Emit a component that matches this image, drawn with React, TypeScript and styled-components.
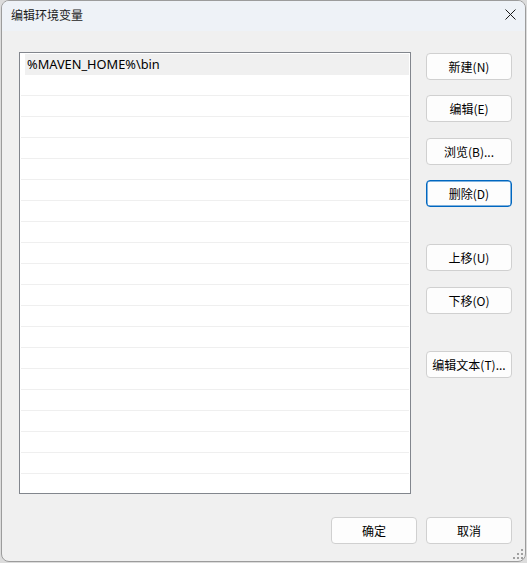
import React from 'react';
import styled, { createGlobalStyle } from 'styled-components';

const GlobalStyle = createGlobalStyle`
  html, body {
    margin: 0;
    padding: 0;
    background: #dcdcdc;
  }
  body {
    font-family: "Noto Sans", "Noto Sans CJK SC", sans-serif;
    font-size: 12px;
    color: #000;
  }
`;

const Window = styled.div`
  position: relative;
  box-sizing: border-box;
  width: 525px;
  height: 562px;
  margin-left: 1px;
  display: flex;
  flex-direction: column;
  border: 1px solid #9c9c9c;
  border-radius: 8px;
  background: #f0f0f0;
  overflow: hidden;
`;

const TitleBar = styled.div`
  height: 30px;
  flex: 0 0 auto;
  display: flex;
  align-items: center;
  justify-content: space-between;
  background: #eef2f7;
  padding: 0 10px 0 9px;
`;

const Title = styled.span`
  font-family: "Noto Sans CJK SC", sans-serif;
  font-size: 12px;
  color: #1b1b1b;
  margin-top: -3px;
`;

const CloseButton = styled.button`
  width: 30px;
  height: 30px;
  border: none;
  background: transparent;
  padding: 0;
  display: flex;
  align-items: center;
  justify-content: center;
  margin-right: -10px;
  margin-top: -3px;
`;

const Body = styled.div`
  flex: 1;
  display: flex;
  flex-direction: column;
  padding: 21px 13px 17px 17px;
`;

const Main = styled.div`
  flex: 1;
  display: flex;
  gap: 15px;
  align-items: flex-start;
`;

const ListBox = styled.div`
  box-sizing: border-box;
  width: 392px;
  height: 442px;
  border: 1px solid #82868d;
  background: #fff;
  padding: 1px;
  overflow: hidden;
`;

const Row = styled.div<{ $selected?: boolean }>`
  box-sizing: border-box;
  height: 21px;
  line-height: 21px;
  border-bottom: 1px solid ${p => (p.$selected ? '#f0f0f0' : '#efefef')};
  margin-left: ${p => (p.$selected ? '4px' : '0')};
  background: ${p => (p.$selected ? '#f0f0f0' : '#fff')};
  padding-left: 2px;
  font-family: "Noto Sans", sans-serif;
  font-size: 12.8px;
  white-space: nowrap;
`;

const ButtonColumn = styled.div`
  display: flex;
  flex-direction: column;
  gap: 37px;
  margin-top: 1px;
`;

const ButtonGroup = styled.div`
  display: flex;
  flex-direction: column;
  gap: 15.4px;
`;

const Button = styled.button<{ $focused?: boolean }>`
  box-sizing: border-box;
  width: 86px;
  height: 27px;
  padding: 0;
  border: 1px solid ${p => (p.$focused ? '#0067c0' : '#d0d0d0')};
  box-shadow: ${p => (p.$focused ? 'inset 0 0 0 0.5px #0067c0' : 'none')};
  border-radius: 4px;
  background: #fdfdfd;
  font-family: "Noto Sans CJK SC", sans-serif;
  font-size: 12px;
  color: #000;
`;

const Footer = styled.div`
  display: flex;
  justify-content: flex-end;
  gap: 9px;
  margin-top: 22px;
`;

const Grip = styled.svg`
  position: absolute;
  right: 2px;
  bottom: 2px;
`;

const entries = ['%MAVEN_HOME%\\bin'];

const App = () => {
  const rows = Array.from({ length: 21 }, (_, i) => entries[i] ?? '');

  return (
    <>
      <GlobalStyle />
      <Window>
        <TitleBar>
          <Title>编辑环境变量</Title>
          <CloseButton aria-label="关闭">
            <svg width="11" height="11" viewBox="0 0 11 11">
              <path d="M0.5 0.5 L10.5 10.5 M10.5 0.5 L0.5 10.5" stroke="#1a1a1a" strokeWidth="1" />
            </svg>
          </CloseButton>
        </TitleBar>
        <Body>
          <Main>
            <ListBox>
              {rows.map((text, i) => (
                <Row key={i} $selected={i === 0}>
                  {text}
                </Row>
              ))}
            </ListBox>
            <ButtonColumn>
              <ButtonGroup>
                <Button>新建(N)</Button>
                <Button>编辑(E)</Button>
                <Button>浏览(B)...</Button>
                <Button $focused>删除(D)</Button>
              </ButtonGroup>
              <ButtonGroup>
                <Button>上移(U)</Button>
                <Button>下移(O)</Button>
              </ButtonGroup>
              <ButtonGroup>
                <Button>编辑文本(T)...</Button>
              </ButtonGroup>
            </ButtonColumn>
          </Main>
          <Footer>
            <Button>确定</Button>
            <Button>取消</Button>
          </Footer>
        </Body>
        <Grip width="10" height="10" viewBox="0 0 10 10">
          <g fill="#a0a0a0">
            <rect x="8" y="0" width="2" height="2" />
            <rect x="4" y="4" width="2" height="2" />
            <rect x="8" y="4" width="2" height="2" />
            <rect x="0" y="8" width="2" height="2" />
            <rect x="4" y="8" width="2" height="2" />
            <rect x="8" y="8" width="2" height="2" />
          </g>
        </Grip>
      </Window>
    </>
  );
};

export default App;
